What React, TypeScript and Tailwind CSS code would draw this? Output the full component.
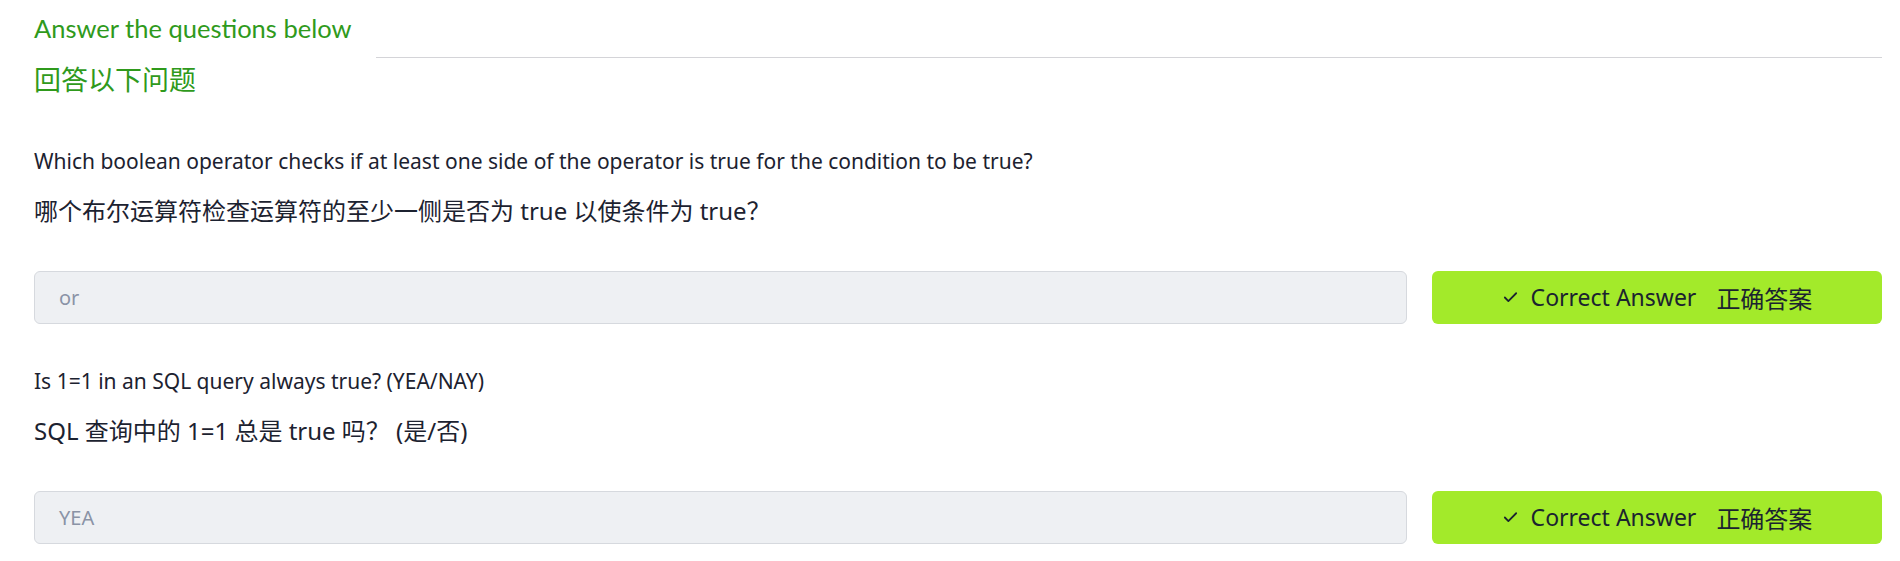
import React from 'react';
import { Check } from 'lucide-react';

const body = "font-['Noto_Sans','Noto_Sans_CJK_SC',sans-serif]";

interface QuestionProps {
    question: string;
    translated: string;
    answer: string;
    first?: boolean;
}

const Question: React.FC<QuestionProps> = ({ question, translated, answer, first }) => {
    return (
        <div className={first ? 'mt-[50px]' : 'mt-[43px]'}>
            <p className={`${body} text-[21px] leading-[28px] text-[#1c2230]`}>{question}</p>
            <p className={`${body} mt-[20px] text-[24px] leading-[32px] text-[#1c2230]`}>{translated}</p>
            <div className="mt-[44px] flex gap-[25px]">
                <div className="flex h-[53px] flex-1 items-center rounded-md border border-[#d6d9de] bg-[#eef0f3] px-[24px]">
                    <span className={`${body} text-[20px] text-[#8a93a6]`}>{answer}</span>
                </div>
                <button className="flex h-[53px] w-[450px] items-center justify-center rounded-md bg-[#a3ea2a] text-[#1b2330]">
                    <Check className="h-[17px] w-[17px]" strokeWidth={2.5} />
                    <span className="ml-[12px] font-['Noto_Sans','Noto_Sans_CJK_SC',sans-serif] text-[23px]">Correct Answer</span>
                    <span className="ml-[20px] font-['Noto_Sans_CJK_SC',sans-serif] text-[24px]">正确答案</span>
                </button>
            </div>
        </div>
    );
};

const App: React.FC = () => {
    return (
        <div className="min-h-screen w-full bg-white pl-[34px] pr-[18px] pt-[11px]">
            <div className="flex">
                <div>
                    <h2 className="font-['Lato','Noto_Sans_CJK_SC',sans-serif] text-[25.5px] leading-[34px] text-[#2f9a1c]">Answer the questions below</h2>
                    <h2 className="mt-[16px] font-['Noto_Sans_CJK_SC',sans-serif] text-[27px] leading-[36px] text-[#2f9a1c]">回答以下问题</h2>
                </div>
                <div className="ml-[25px] mt-[46px] h-px flex-1 self-start bg-[#d4d4d8]" />
            </div>
            <Question
                first
                question="Which boolean operator checks if at least one side of the operator is true for the condition to be true?"
                translated="哪个布尔运算符检查运算符的至少一侧是否为 true 以使条件为 true？"
                answer="or"
            />
            <Question
                question="Is 1=1 in an SQL query always true? (YEA/NAY)"
                translated="SQL 查询中的 1=1 总是 true 吗？ (是/否)"
                answer="YEA"
            />
        </div>
    );
};

export default App;
